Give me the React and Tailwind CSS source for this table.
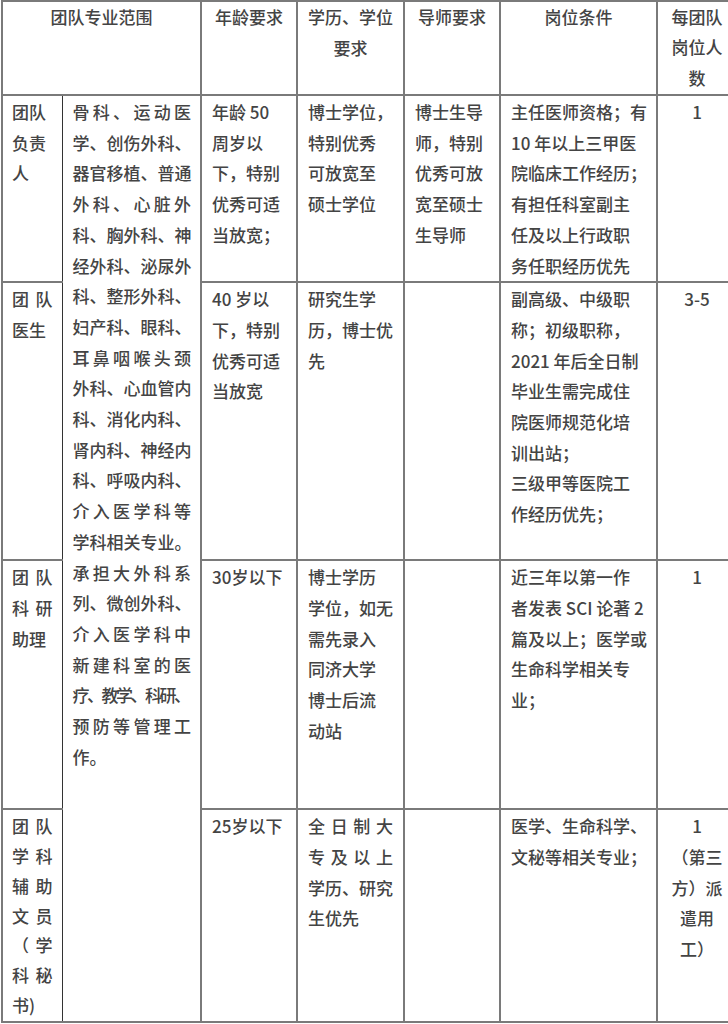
import React from 'react';

const font = { fontFamily: '"Noto Sans CJK SC", "Noto Sans", sans-serif' };

// each line: string, or [string, 'j'] to spread it over the cell width, [string, 't'] to squeeze it
const Lines = ({ lines, center }) => (
  <>
    {lines.map((l, i) => {
      const text = Array.isArray(l) ? l[0] : l;
      const mode = Array.isArray(l) ? l[1] : '';
      let cls = 'whitespace-nowrap ';
      if (mode === 'j') cls += 'text-justify [text-align-last:justify]';
      else if (mode === 't') cls += 'tracking-[-2.5px]';
      else if (center) cls += 'text-center';
      return (
        <div key={i} className={cls}>
          {text}
        </div>
      );
    })}
  </>
);

const cell = 'border-2 border-[#7a7a7a] align-top px-[10px] pt-px';
const leftCell = 'border-y-2 border-l-2 border-r border-[#7a7a7a] border-r-[#333] align-top px-[9px] pt-px';
const head = 'border-2 border-[#7a7a7a] align-top font-medium text-center pt-0';

const scope = [
  ['骨科、运动医', 'j'],
  ['学、创伤外科、', 'j'],
  ['器官移植、普通', 'j'],
  ['外科、心脏外', 'j'],
  ['科、胸外科、神', 'j'],
  ['经外科、泌尿外', 'j'],
  ['科、整形外科、', 'j'],
  ['妇产科、眼科、', 'j'],
  ['耳鼻咽喉头颈', 'j'],
  ['外科、心血管内', 'j'],
  ['科、消化内科、', 'j'],
  ['肾内科、神经内', 'j'],
  ['科、呼吸内科、', 'j'],
  ['介入医学科等', 'j'],
  ['学科相关专业。', 'j'],
  ['承担大外科系', 'j'],
  ['列、微创外科、', 'j'],
  ['介入医学科中', 'j'],
  ['新建科室的医', 'j'],
  ['疗、教学、科研、', 't'],
  ['预防等管理工', 'j'],
  '作。',
];

const rows = [
  {
    h: 'h-[183px]',
    role: ['团队', '负责', '人'],
    age: ['年龄 50', '周岁以', '下，特别', '优秀可适', '当放宽；'],
    degree: ['博士学位，', '特别优秀', '可放宽至', '硕士学位'],
    tutor: ['博士生导', '师，特别', '优秀可放', '宽至硕士', '生导师'],
    cond: ['主任医师资格；有', '10 年以上三甲医', '院临床工作经历；', '有担任科室副主', '任及以上行政职', '务任职经历优先'],
    num: ['1'],
  },
  {
    h: 'h-[278px]',
    role: [['团队', 'j'], '医生'],
    age: ['40 岁以', '下，特别', '优秀可适', '当放宽'],
    degree: ['研究生学', '历，博士优', '先'],
    tutor: [],
    cond: ['副高级、中级职', '称；初级职称，', '2021 年后全日制', '毕业生需完成住', '院医师规范化培', '训出站；', '三级甲等医院工', '作经历优先；'],
    num: ['3-5'],
  },
  {
    h: 'h-[249px]',
    role: [['团队', 'j'], ['科研', 'j'], '助理'],
    age: ['30岁以下'],
    degree: ['博士学历', '学位，如无', '需先录入', '同济大学', '博士后流', '动站'],
    tutor: [],
    cond: ['近三年以第一作', '者发表 SCI 论著 2', '篇及以上；医学或', '生命科学相关专', '业；'],
    num: ['1'],
  },
  {
    h: 'h-[213px]',
    role: [['团队', 'j'], ['学科', 'j'], ['辅助', 'j'], ['文员', 'j'], ['（学', 'j'], ['科秘', 'j'], '书)'],
    tight: true,
    age: ['25岁以下'],
    degree: [['全日制大', 'j'], ['专及以上', 'j'], '学历、研究', '生优先'],
    tutor: [],
    cond: ['医学、生命科学、', '文秘等相关专业；'],
    num: ['1', '（第三', '方）派', '遣用', '工）'],
  },
];

export default function App() {
  return (
    <div className="w-[728px] h-[1024px] overflow-hidden bg-white" style={font}>
      <table className="table-fixed border-collapse w-[735px] ml-px text-[17px] leading-[30.7px] text-[#444] font-medium">
        <colgroup>
          <col className="w-[60px]" />
          <col className="w-[139px]" />
          <col className="w-[96px]" />
          <col className="w-[107px]" />
          <col className="w-[96px]" />
          <col className="w-[157px]" />
          <col className="w-[80px]" />
        </colgroup>
        <thead>
          <tr className="h-[94px]">
            <th colSpan={2} className={head}>
              团队专业范围
            </th>
            <th className={head}>年龄要求</th>
            <th className={head}>
              <div>学历、学位</div>
              <div>要求</div>
            </th>
            <th className={head}>导师要求</th>
            <th className={head}>岗位条件</th>
            <th className={head + ' leading-[30.3px]'}>
              <div>每团队</div>
              <div>岗位人</div>
              <div>数</div>
            </th>
          </tr>
        </thead>
        <tbody>
          {rows.map((r, i) => (
            <tr key={i} className={r.h}>
              <td className={leftCell + (r.tight ? ' leading-[29.8px]' : '')}>
                <Lines lines={r.role} />
              </td>
              {i === 0 && (
                <td rowSpan={4} className="border-y-2 border-r-2 border-l border-[#7a7a7a] border-l-[#333] align-top pl-[10px] pr-[9px] pt-px">
                  <Lines lines={scope} />
                </td>
              )}
              <td className={cell}>
                <Lines lines={r.age} />
              </td>
              <td className={cell}>
                <Lines lines={r.degree} />
              </td>
              <td className={cell}>
                <Lines lines={r.tutor} />
              </td>
              <td className={cell}>
                <Lines lines={r.cond} />
              </td>
              <td className={cell + ' text-center'}>
                <Lines lines={r.num} center />
              </td>
            </tr>
          ))}
        </tbody>
      </table>
    </div>
  );
}
